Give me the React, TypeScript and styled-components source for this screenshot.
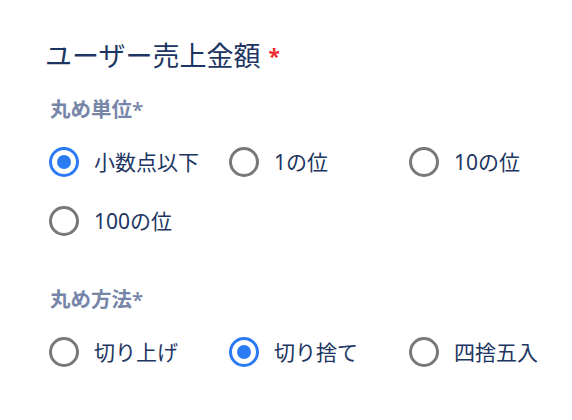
import React, { useState } from "react";
import styled, { createGlobalStyle } from "styled-components";

const Global = createGlobalStyle`
  html, body { margin: 0; padding: 0; background: #ffffff; }
  body { font-family: "Noto Sans", "Noto Sans CJK JP", sans-serif; }
`;

const Page = styled.div`
  padding: 38px 45px 0 45px;
  display: flex;
  flex-direction: column;
`;

const Title = styled.h2`
  margin: 0;
  font-size: 27px;
  font-weight: 400;
  line-height: 36px;
  color: #1c3562;
  display: flex;
  align-items: center;
  gap: 8px;
`;

const Required = styled.span`
  color: #ee2b2b;
  font-size: 21px;
  font-weight: 700;
  line-height: 1;
`;

const Group = styled.fieldset<{ $top: number }>`
  border: 0;
  margin: ${(p) => p.$top}px 0 0 0;
  padding: 0;
  min-width: 0;
`;

const Legend = styled.legend`
  padding: 0 0 0 5px;
  font-size: 20.5px;
  font-weight: 600;
  line-height: 28px;
  color: #7786a8;
`;

const Options = styled.div`
  display: grid;
  grid-template-columns: repeat(3, 180px);
  grid-auto-rows: 59px;
  margin-top: 9px;
  margin-left: 4px;
`;

const Option = styled.label`
  display: flex;
  align-items: center;
  gap: 15px;
  cursor: pointer;
  font-size: 21px;
  line-height: 28px;
  color: #1c3562;
`;

const Circle = styled.span<{ $checked: boolean }>`
  box-sizing: border-box;
  width: 30px;
  height: 30px;
  border-radius: 50%;
  border: 3px solid ${(p) => (p.$checked ? "#2a7bf4" : "#787878")};
  display: flex;
  align-items: center;
  justify-content: center;
  flex: none;
  &::after {
    content: "";
    width: 14px;
    height: 14px;
    border-radius: 50%;
    background: #2a7bf4;
    display: ${(p) => (p.$checked ? "block" : "none")};
  }
`;

const Hidden = styled.input`
  position: absolute;
  opacity: 0;
  width: 0;
  height: 0;
`;

function RadioGroup({
  name,
  legend,
  options,
  initial,
  top,
}: {
  name: string;
  legend: string;
  options: string[];
  initial: string;
  top: number;
}) {
  const [value, setValue] = useState(initial);
  return (
    <Group $top={top}>
      <Legend>{legend}</Legend>
      <Options>
        {options.map((o) => (
          <Option key={o}>
            <Hidden
              type="radio"
              name={name}
              checked={value === o}
              onChange={() => setValue(o)}
            />
            <Circle $checked={value === o} />
            {o}
          </Option>
        ))}
      </Options>
    </Group>
  );
}

export default function App() {
  return (
    <>
      <Global />
      <Page>
        <Title>
          ユーザー売上金額<Required>*</Required>
        </Title>
        <RadioGroup
          name="unit"
          legend="丸め単位*"
          options={["小数点以下", "1の位", "10の位", "100の位"]}
          initial="小数点以下"
          top={21}
        />
        <RadioGroup
          name="method"
          legend="丸め方法*"
          options={["切り上げ", "切り捨て", "四捨五入"]}
          initial="切り捨て"
          top={35}
        />
      </Page>
    </>
  );
}
